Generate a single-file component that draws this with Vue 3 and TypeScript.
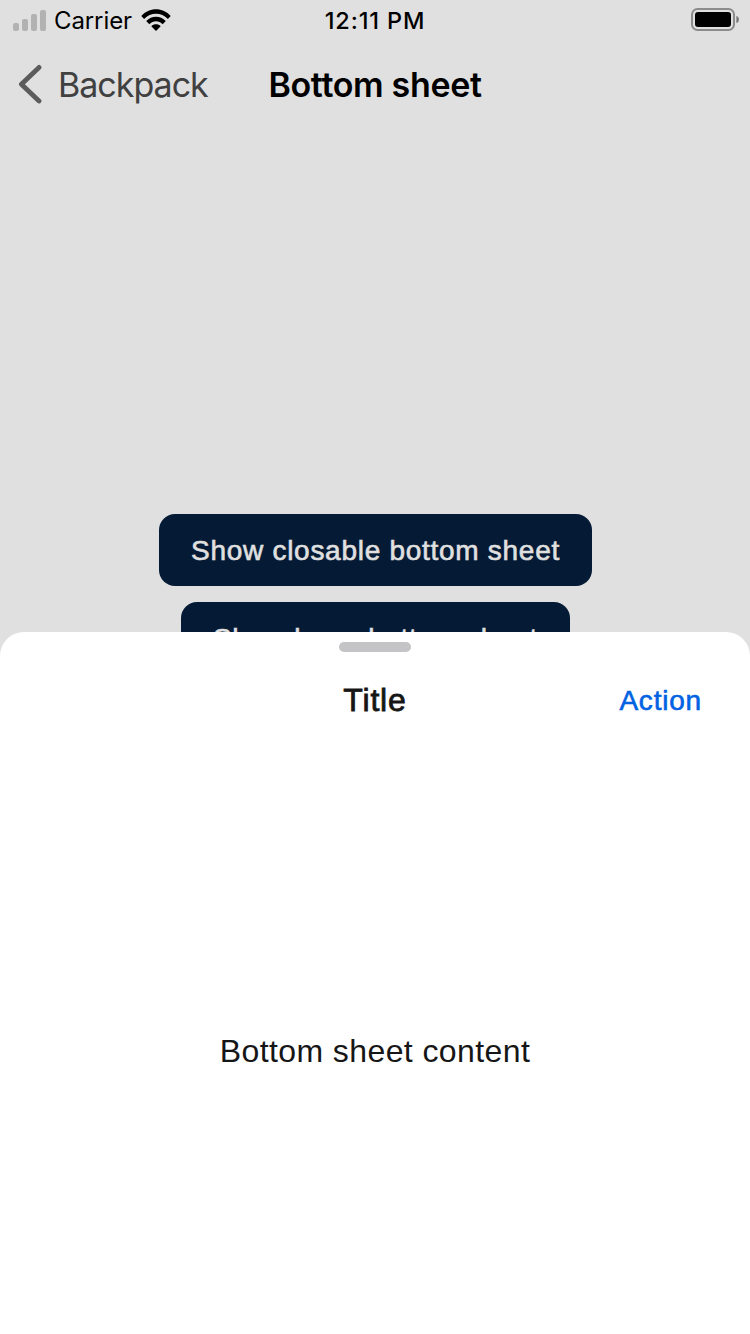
<script setup lang="ts">
const buttons: string[] = ['Show closable bottom sheet', 'Show large bottom sheet']
const signalHeights: number[] = [8, 12, 17, 21]
</script>

<template>
  <main class="screen">
    <header class="status">
      <div class="carrier">
        <div class="signal">
          <i v-for="h in signalHeights" :key="h" :style="{ height: h + 'px' }"></i>
        </div>
        <span class="carrier-name">Carrier</span>
        <svg class="wifi" width="30" height="22" viewBox="0 0 30 22">
          <path d="M0.3 7 C8 -2.1 22 -2.1 29.7 7 L26.9 9.9 C20.5 3 9.5 3 3.1 9.9Z" />
          <path d="M5.2 12.1 C10.5 6.4 19.5 6.4 24.8 12.1 L21.7 15.2 C18 11.3 12 11.3 8.3 15.2Z" />
          <path d="M10.3 17.2 C12.8 14.7 17.2 14.7 19.7 17.2 L15 21.9Z" />
        </svg>
      </div>
      <span class="time">12:11 PM</span>
      <svg class="battery" width="48" height="24" viewBox="0 0 48 24">
        <rect x="1" y="1" width="42" height="21" rx="5.5" fill="none" stroke="#8c8c8c" stroke-width="2" />
        <rect x="4" y="4" width="36" height="15" rx="3" />
        <path d="M45.4 7.8 Q48 9 48 11.5 Q48 14 45.4 15.2Z" fill="#777" />
      </svg>
    </header>

    <nav class="nav">
      <div class="back">
        <svg width="24" height="40" viewBox="0 0 24 40">
          <path d="M21 3.4 L3.4 20.2 L21 37" fill="none" stroke="#5c5c5c" stroke-width="4.8" stroke-linecap="round" stroke-linejoin="round" />
        </svg>
        <span>Backpack</span>
      </div>
      <h1>Bottom sheet</h1>
    </nav>

    <div class="buttons">
      <button v-for="b in buttons" :key="b" type="button">{{ b }}</button>
    </div>

    <section class="sheet">
      <div class="handle"></div>
      <div class="sheet-head">
        <h2>Title</h2>
        <a class="action">Action</a>
      </div>
      <p>Bottom sheet content</p>
    </section>
  </main>
</template>

<style>
body {
  margin: 0;
}
</style>

<style scoped>
.screen {
  position: relative;
  width: 750px;
  height: 1334px;
  overflow: hidden;
  background: #e0e0e0;
  font-family: Inter, "Liberation Sans", sans-serif;
  color: #000;
}
.status {
  display: grid;
  grid-template-columns: 1fr auto 1fr;
  align-items: center;
  height: 40px;
}
.carrier {
  display: flex;
  align-items: center;
  padding-left: 13px;
}
.signal {
  display: flex;
  align-items: flex-end;
  gap: 3px;
  height: 21px;
}
.signal i {
  width: 6px;
  border-radius: 2px;
  background: #b2b2b2;
}
.carrier-name {
  margin-left: 8px;
  width: 78px;
  padding-top: 2px;
  font-size: 24px;
  line-height: 38px;
  letter-spacing: -0.1px;
  white-space: nowrap;
}
.wifi {
  margin-left: 9px;
}
.time {
  padding-top: 2px;
  font-size: 23.5px;
  font-weight: 500;
  line-height: 38px;
  letter-spacing: 0.85px;
}
.battery {
  justify-self: end;
  margin-right: 11px;
}
.nav {
  display: grid;
  grid-template-columns: 1fr auto 1fr;
  align-items: center;
  height: 88px;
}
.back {
  display: flex;
  align-items: center;
  gap: 16px;
  padding-left: 18px;
  font-size: 34px;
  letter-spacing: -1px;
  color: #404040;
}
.nav h1 {
  margin: 0;
  padding-top: 1px;
  font-size: 34px;
  font-weight: 600;
  line-height: 87px;
  letter-spacing: -0.35px;
}
.buttons {
  display: flex;
  flex-direction: column;
  align-items: center;
  gap: 16px;
  padding: 386px 0 0 1px;
}
.buttons button {
  height: 72px;
  padding: 2px 32px 0;
  border: 0;
  border-radius: 16px;
  background: #051b35;
  color: #e0e0e0;
  font-family: "Liberation Sans", Arial, sans-serif;
  font-size: 28px;
  line-height: 70px;
  letter-spacing: 0.72px;
  -webkit-text-stroke: 0.6px currentColor;
}
.buttons button + button {
  letter-spacing: 0.66px;
}
.sheet {
  position: absolute;
  inset: 632px 0 0;
  display: flex;
  flex-direction: column;
  align-items: center;
  border-radius: 24px 24px 0 0;
  background: #fff;
  color: #161616;
  font-family: "Liberation Sans", Arial, sans-serif;
}
.handle {
  width: 72px;
  height: 10px;
  margin-top: 10px;
  border-radius: 5px;
  background: #c4c4c6;
}
.sheet-head {
  display: grid;
  grid-template-columns: 1fr auto 1fr;
  align-items: center;
  width: 100%;
  height: 96px;
}
.sheet-head h2 {
  grid-column: 2;
  margin: 0;
  padding-top: 1px;
  font-size: 32px;
  font-weight: 400;
  letter-spacing: 0.8px;
  -webkit-text-stroke: 0.8px currentColor;
}
.action {
  justify-self: end;
  margin-right: 48px;
  padding-top: 1px;
  color: #0062e3;
  font-size: 28px;
  letter-spacing: 0.8px;
  -webkit-text-stroke: 0.6px currentColor;
}
.sheet p {
  margin: 284px 0 0;
  font-size: 32px;
  line-height: 38px;
  letter-spacing: 0.4px;
}
</style>
